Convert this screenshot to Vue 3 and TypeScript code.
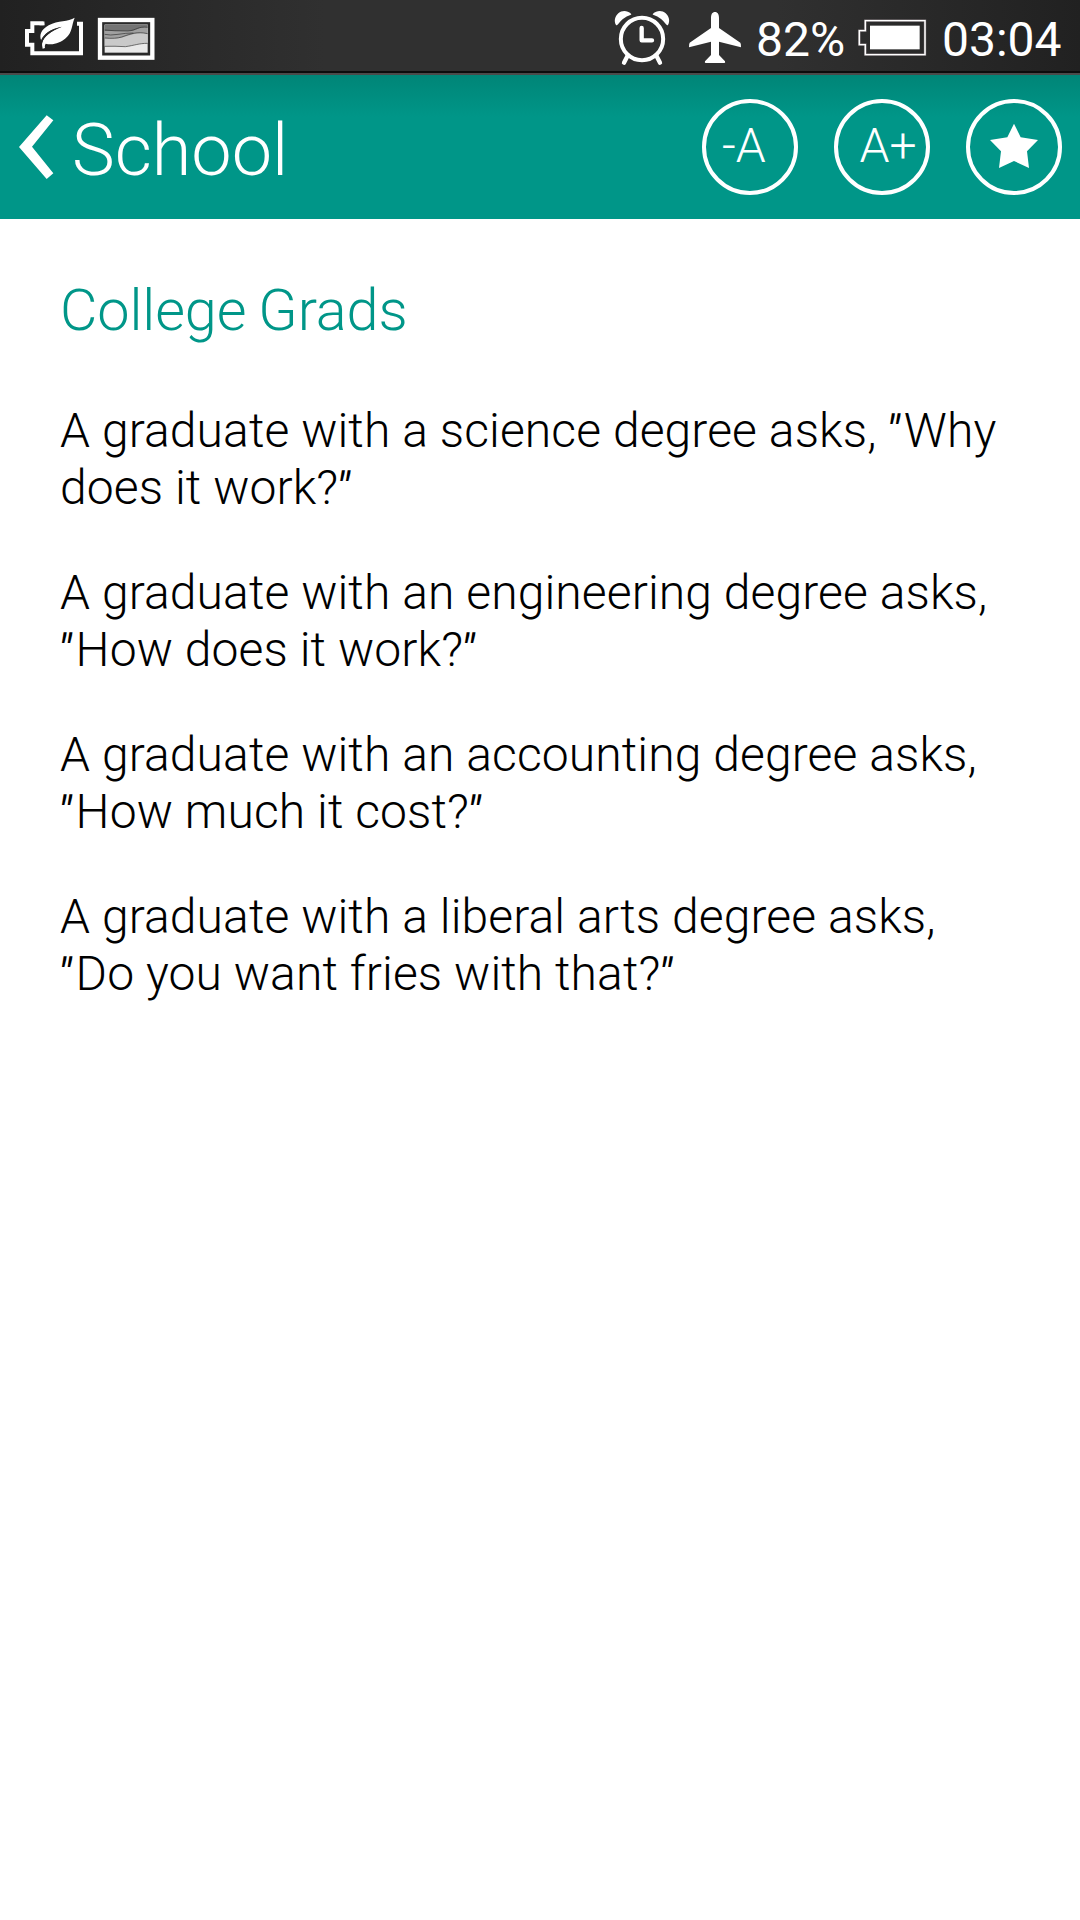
<script setup lang="ts">
const paragraphs: string[][] = [
  ['A graduate with a science degree asks, "Why', 'does it work?"'],
  ['A graduate with an engineering degree asks,', '"How does it work?"'],
  ['A graduate with an accounting degree asks,', '"How much it cost?"'],
  ['A graduate with a liberal arts degree asks,', '"Do you want fries with that?"'],
]

// Splits a line so that quotation marks can be slanted separately.
const pieces = (text: string): string[] => text.split(/(")/).filter((piece) => piece !== '')
</script>

<template>
  <div class="screen">
    <div class="status">
      <div class="side">
        <!-- power saver -->
        <svg width="70" height="75" viewBox="60 0 210 225">
          <path d="M131 70H97V93H81V134H97V160H243V71H231" fill="none" stroke="#fff" stroke-width="12" />
          <path d="M133 64L118 76H134Z" fill="#fff" />
          <path d="M224 53C205 66 174 60 146 76C123 89 117 106 124 122C131 103 150 87 184 81C153 93 132 109 127 127C125 135 127 140 128 146L135 144C134 139 134 136 137 131C158 137 181 129 197 115C218 96 214 77 224 53Z" fill="#fff" />
          <path d="M123 121C131 102 151 87 186 80C151 93 131 110 126 130Z" fill="#292929" />
        </svg>
        <!-- picture -->
        <svg width="70" height="75" viewBox="270 0 210 225">
          <rect x="300" y="60" width="157" height="113" fill="#292929" stroke="#fff" stroke-width="13" />
          <rect x="314" y="74" width="129" height="84" fill="#e9e9e9" />
          <path d="M314 74H443V130C420 130 407 134 387 139H314Z" fill="#c9c9c9" />
          <path d="M314 74H443V101C416 94 385 108 365 113Q338 116 314 114Z" fill="#a0a0a0" />
          <path d="M314 74H443V82C415 80 411 91 392 93H314Z" fill="#747474" />
          <g fill="none" stroke="#303030" stroke-width="2">
            <path d="M314 90Q340 93 384 93C410 91 414 78 443 82" />
            <path d="M314 103Q330 107 354 103T400 99" />
            <path d="M314 114Q347 117 365 111C394 101 410 94 443 101" />
            <path d="M314 139Q345 138 376 140C405 136 416 130 443 130" />
          </g>
        </svg>
      </div>
      <div class="side">
        <!-- alarm -->
        <svg width="66" height="75" viewBox="0 -15 198 225">
          <circle cx="96" cy="102" r="63.5" fill="none" stroke="#fff" stroke-width="12" />
          <path d="M95 69V106H126" fill="none" stroke="#fff" stroke-width="13" stroke-linecap="round" stroke-linejoin="round" />
          <path d="M18 60C11 48 15 34 25 25C36 15 52 16 63 26Q66 29 61 30Q38 38 24 58Q20 62 18 60Z" fill="#fff" />
          <path d="M174 60C181 48 177 34 167 25C156 15 140 16 129 26Q126 29 131 30Q154 38 168 58Q172 62 174 60Z" fill="#fff" />
          <path d="M52 154L42 173M140 154L150 173" fill="none" stroke="#fff" stroke-width="13" stroke-linecap="round" />
        </svg>
        <!-- airplane mode -->
        <svg width="80" height="75" viewBox="228 0 240 225">
          <path d="M345 36C353 36 357 43 357 54V84L421 128Q423 130 423 142L357 125V165L375 184Q377 189 373 189H317Q313 189 315 184L333 165V125L267 142Q267 130 269 128L333 84V54C333 43 337 36 345 36Z" fill="#fff" />
        </svg>
        <span class="percent">82%</span>
        <!-- battery -->
        <svg width="80" height="75" viewBox="0 -36 240 225">
          <path d="M40 26H219V128H40V98H22V56H40Z" fill="none" stroke="#8b8487" stroke-width="7" />
          <path d="M40 26H219V128H40V98H22V56H40Z" fill="none" stroke="#fff" stroke-width="4" />
          <rect x="54" y="41" width="149" height="71" fill="#fff" />
        </svg>
        <span class="clock">03:04</span>
      </div>
    </div>

    <header class="bar">
      <div class="back">
        <svg width="72" height="144" viewBox="0 225 216 432">
          <path d="M140 346L160 361L96 440L160 520L140 537L57 441Z" fill="#fff" />
        </svg>
        <h1>School</h1>
      </div>
      <div class="actions">
        <button class="round smaller">-A</button>
        <button class="round larger">A+</button>
        <button class="round">
          <svg width="88" height="88" viewBox="870 69 264 264">
            <path d="M1002 131L1022 172L1074 180L1041 214L1047 264L1002 243L957 264L963 214L930 180L982 172Z" fill="#fff" />
          </svg>
        </button>
      </div>
    </header>

    <main class="joke">
      <h2>College Grads</h2>
      <p v-for="(lines, i) in paragraphs" :key="i">
        <span v-for="line in lines" :key="line" class="line"><span
          v-for="(piece, k) in pieces(line)" :key="k" :class="{ quote: piece === '&quot;' }">{{ piece }}</span></span>
      </p>
    </main>
  </div>
</template>

<style>
body {
  background: #fff;
}
</style>

<style scoped>
.screen {
  width: 1080px;
  height: 1920px;
  overflow: hidden;
  background: #fff;
  font-family: Roboto, sans-serif;
  font-weight: 300;
}

svg {
  display: block;
  flex: none;
}

.status {
  box-sizing: border-box;
  height: 75px;
  padding-left: 20px;
  display: flex;
  justify-content: space-between;
  color: #fff;
  background:
    linear-gradient(#0c0c0c, #0c0c0c) 0 71px / 100% 2px no-repeat,
    linear-gradient(#4a4a4a, #4a4a4a) 0 73px / 100% 2px no-repeat,
    linear-gradient(90deg, #212121, #303030 30%, #303030 72%, #212121);
}

.side {
  display: flex;
  height: 75px;
}

.percent,
.clock {
  box-sizing: border-box;
  font-size: 48px;
  font-weight: 400;
  line-height: 79px;
  white-space: nowrap;
}

.percent {
  width: 96px;
}

.clock {
  width: 148px;
  padding-left: 10px;
}

.bar {
  height: 144px;
  display: flex;
  justify-content: space-between;
  background: linear-gradient(#008577, #009688 42px);
  color: #fff;
}

.back {
  display: flex;
}

h1 {
  margin: 0;
  padding-top: 7px;
  font-size: 72px;
  font-weight: 300;
  line-height: 138px;
}

.actions {
  display: flex;
  gap: 36px;
  padding: 24px 18px 0 0;
}

.round {
  box-sizing: border-box;
  width: 96px;
  height: 96px;
  padding: 0;
  border: 4px solid #fff;
  border-radius: 50%;
  background: none;
  color: #fff;
  font: 300 48px/86px Roboto, sans-serif;
  display: flex;
  align-items: flex-start;
  justify-content: center;
}

.smaller {
  padding-right: 12px;
}

.larger {
  padding-left: 12px;
}

.joke {
  padding: 52px 60px 0;
  color: #000;
}

h2 {
  margin: 0 0 51px;
  font-size: 57.6px;
  font-weight: 300;
  line-height: 80px;
  letter-spacing: -0.1px;
  word-spacing: -2px;
  color: #009688;
}

p {
  margin: 0 0 48px;
  font-size: 48px;
  line-height: 57px;
  letter-spacing: 0.1px;
}

.line {
  display: block;
  white-space: nowrap;
}

.quote {
  margin: 0 4px 0 -2.5px;
  font-size: 45px;
  font-style: italic;
  font-weight: 400;
  line-height: 1;
}
</style>
